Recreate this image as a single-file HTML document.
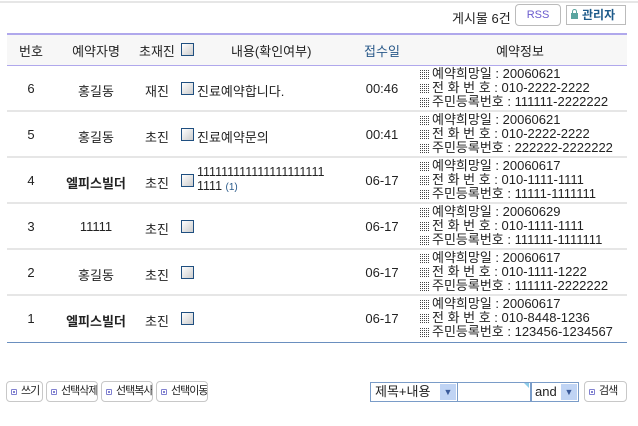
<!DOCTYPE html><html><head><meta charset="utf-8"><style>
body{margin:0;width:638px;height:426px;background:#fff;font-family:"Liberation Sans","Noto Sans CJK KR","NanumGothic",sans-serif;font-size:13px;color:#222;position:relative;overflow:hidden}
.a{position:absolute;white-space:nowrap}
.cb{position:absolute;width:11px;height:11px;border:1px solid #1f4f80;background:linear-gradient(135deg,#fff,#ccc)}
.sep{position:absolute;left:7px;width:620px;height:2px;background:#e6e6e6}
.btn{position:absolute;top:381px;height:21px;border:1px solid #c8c8c8;border-radius:4px;background:#fff;line-height:19px;font-size:11px;letter-spacing:-1px;padding-left:14px;box-sizing:border-box;white-space:nowrap;overflow:hidden}
.btn:before{content:"";position:absolute;left:4px;top:7px;width:4px;height:4px;border:1px solid #8080d0;border-radius:1px;box-shadow:inset 0 0 0 1px #fff;background:#8080d0}
.dot{display:inline-block;width:9px;height:9px;margin-right:3px;vertical-align:-1px;background:repeating-linear-gradient(90deg,#444 0 1px,#fff 1px 2px),#fff;-webkit-mask:repeating-linear-gradient(0deg,#000 0 1px,transparent 1px 2px)}
.c{text-align:center}
.i{line-height:14px}
</style></head><body>
<div class="a" style="left:0;top:1px;width:638px;height:2px;background:#e6e6e6"></div>
<div class="a" style="left:452px;top:8px">게시물 6건</div>
<div class="a" style="left:515px;top:4px;width:46px;height:22px;border:1px solid #bbb;border-radius:4px;box-sizing:border-box;text-align:center;line-height:20px;color:#6a5acd;font-size:11px">RSS</div>
<div class="a" style="left:566px;top:5px;width:60px;height:20px;border:1px solid #bbb;box-sizing:border-box;line-height:18px;color:#1d5a8a;font-weight:bold;font-size:12px;padding-left:15px">관리자<span style="position:absolute;left:4px;top:7px;width:7px;height:6px;background:#5aa5a0"></span><span style="position:absolute;left:5px;top:3px;width:3px;height:4px;border:1px solid #5aa5a0;border-bottom:0;border-radius:3px 3px 0 0"></span></div>
<div class="a" style="left:7px;top:33px;width:620px;height:2px;background:#b0a8ec"></div>
<div class="a" style="left:7px;top:35px;width:620px;height:30px;background:#f7f7f7"></div>
<div class="a" style="left:7px;top:65px;width:620px;height:1px;background:#b0a8ec"></div>
<div class="a c" style="left:7px;width:48px;top:41px">번호</div>
<div class="a c" style="left:66px;width:60px;top:41px">예약자명</div>
<div class="a" style="left:139px;top:41px">초재진</div>
<div class="cb" style="left:181px;top:43px"></div>
<div class="a" style="left:231px;top:41px">내용(확인여부)</div>
<div class="a c" style="left:352px;width:60px;top:41px;color:#2a5a8a">접수일</div>
<div class="a c" style="left:440px;width:160px;top:41px">예약정보</div>

<div class="a c" style="left:7px;width:48px;top:81px">6</div>
<div class="a c" style="left:66px;width:60px;top:81px">홍길동</div>
<div class="a" style="left:145px;top:81px">재진</div><div class="cb" style="left:181px;top:82px"></div>
<div class="a" style="left:197px;top:81px">진료예약합니다.</div>
<div class="a c" style="left:352px;width:60px;top:81px">00:46</div>
<div class="a i" style="left:420px;top:67px"><span class="dot"></span>예약희망일 : 20060621<br><span class="dot"></span>전 화 번 호 : 010-2222-2222<br><span class="dot"></span>주민등록번호 : 111111-2222222</div>
<div class="sep" style="top:110px"></div>

<div class="a c" style="left:7px;width:48px;top:127px">5</div>
<div class="a c" style="left:66px;width:60px;top:127px">홍길동</div>
<div class="a" style="left:145px;top:127px">초진</div><div class="cb" style="left:181px;top:128px"></div>
<div class="a" style="left:197px;top:127px">진료예약문의</div>
<div class="a c" style="left:352px;width:60px;top:127px">00:41</div>
<div class="a i" style="left:420px;top:113px"><span class="dot"></span>예약희망일 : 20060621<br><span class="dot"></span>전 화 번 호 : 010-2222-2222<br><span class="dot"></span>주민등록번호 : 222222-2222222</div>
<div class="sep" style="top:156px"></div>

<div class="a c" style="left:7px;width:48px;top:173px">4</div>
<div class="a c" style="left:66px;width:60px;top:173px;font-weight:bold">엘피스빌더</div>
<div class="a" style="left:145px;top:173px">초진</div><div class="cb" style="left:181px;top:174px"></div>
<div class="a i" style="left:197px;top:165px;font-size:12.5px">111111111111111111111<br>1111 <span style="color:#2a5a8a;font-size:10px">(1)</span></div>
<div class="a c" style="left:352px;width:60px;top:173px">06-17</div>
<div class="a i" style="left:420px;top:159px"><span class="dot"></span>예약희망일 : 20060617<br><span class="dot"></span>전 화 번 호 : 010-1111-1111<br><span class="dot"></span>주민등록번호 : 11111-1111111</div>
<div class="sep" style="top:202px"></div>

<div class="a c" style="left:7px;width:48px;top:219px">3</div>
<div class="a c" style="left:66px;width:60px;top:219px">11111</div>
<div class="a" style="left:145px;top:219px">초진</div><div class="cb" style="left:181px;top:220px"></div>
<div class="a c" style="left:352px;width:60px;top:219px">06-17</div>
<div class="a i" style="left:420px;top:205px"><span class="dot"></span>예약희망일 : 20060629<br><span class="dot"></span>전 화 번 호 : 010-1111-1111<br><span class="dot"></span>주민등록번호 : 111111-1111111</div>
<div class="sep" style="top:248px"></div>

<div class="a c" style="left:7px;width:48px;top:265px">2</div>
<div class="a c" style="left:66px;width:60px;top:265px">홍길동</div>
<div class="a" style="left:145px;top:265px">초진</div><div class="cb" style="left:181px;top:266px"></div>
<div class="a c" style="left:352px;width:60px;top:265px">06-17</div>
<div class="a i" style="left:420px;top:251px"><span class="dot"></span>예약희망일 : 20060617<br><span class="dot"></span>전 화 번 호 : 010-1111-1222<br><span class="dot"></span>주민등록번호 : 111111-2222222</div>
<div class="sep" style="top:294px"></div>

<div class="a c" style="left:7px;width:48px;top:311px">1</div>
<div class="a c" style="left:66px;width:60px;top:311px;font-weight:bold">엘피스빌더</div>
<div class="a" style="left:145px;top:311px">초진</div><div class="cb" style="left:181px;top:312px"></div>
<div class="a c" style="left:352px;width:60px;top:311px">06-17</div>
<div class="a i" style="left:420px;top:297px"><span class="dot"></span>예약희망일 : 20060617<br><span class="dot"></span>전 화 번 호 : 010-8448-1236<br><span class="dot"></span>주민등록번호 : 123456-1234567</div>
<div class="a" style="left:7px;top:342px;width:620px;height:1px;background:#6a8fbf"></div>

<div class="btn" style="left:6px;width:37px">쓰기</div>
<div class="btn" style="left:46px;width:52px">선택삭제</div>
<div class="btn" style="left:101px;width:52px">선택복사</div>
<div class="btn" style="left:156px;width:52px">선택이동</div>

<div class="a" style="left:370px;top:382px;width:88px;height:20px;border:1px solid #7a9cc8;box-sizing:border-box;line-height:18px;padding-left:4px">제목+내용</div>
<div class="a" style="left:440px;top:384px;width:16px;height:16px;background:#c0d4f4;color:#3a5a9a;font-size:9px;text-align:center;line-height:16px">▼</div>
<div class="a" style="left:458px;top:382px;width:73px;height:20px;border:1px solid #7a9cc8;border-left:0;box-sizing:border-box"></div>
<div class="a" style="left:524px;top:383px;width:0;height:0;border-top:5px solid #8ccbe8;border-left:5px solid transparent"></div>
<div class="a" style="left:531px;top:382px;width:48px;height:20px;border:1px solid #7a9cc8;box-sizing:border-box;line-height:18px;padding-left:3px">and</div>
<div class="a" style="left:561px;top:384px;width:16px;height:16px;background:#c0d4f4;color:#3a5a9a;font-size:9px;text-align:center;line-height:16px">▼</div>
<div class="btn" style="left:584px;width:43px;top:381px">검색</div>
</body></html>
